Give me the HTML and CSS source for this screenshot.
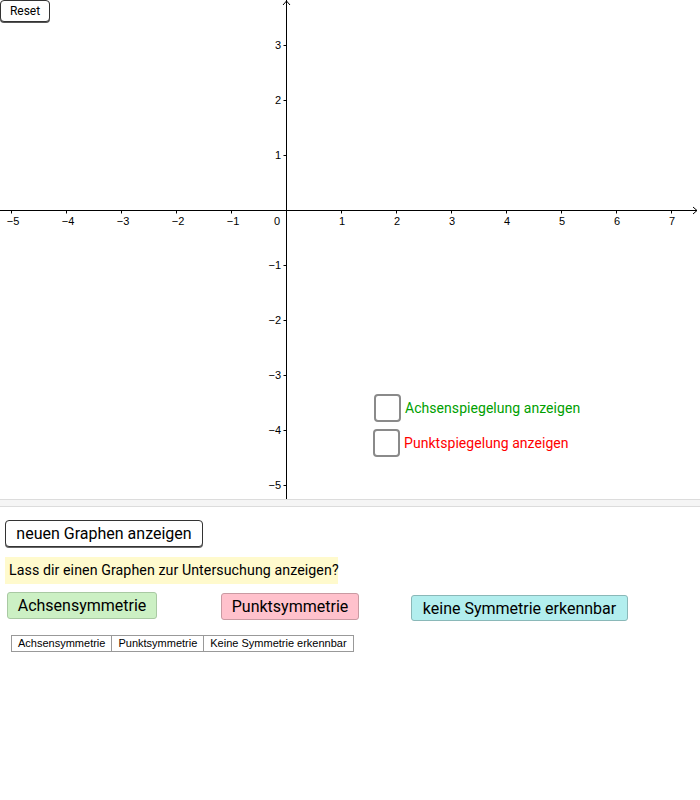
FILE: index.html
```html
<!DOCTYPE html>
<html>
<head>
<meta charset="utf-8">
<link rel="stylesheet" href="styles.css">
</head>
<body>
<div class="applet">
  <div class="graph">
    <svg class="axes" width="698" height="499" viewBox="0 0 698 499">
      <g stroke="#000" stroke-width="1" fill="none">
        <line x1="286.5" y1="0" x2="286.5" y2="499"/>
        <line x1="0" y1="210.5" x2="697" y2="210.5"/>
        <polyline points="283,5 286.5,1 290,5"/>
        <polyline points="693,207 697,210.5 693,214"/>
        <line x1="11.5" y1="210.5" x2="11.5" y2="213.5"/>
        <line x1="66.5" y1="210.5" x2="66.5" y2="213.5"/>
        <line x1="121.5" y1="210.5" x2="121.5" y2="213.5"/>
        <line x1="176.5" y1="210.5" x2="176.5" y2="213.5"/>
        <line x1="231.5" y1="210.5" x2="231.5" y2="213.5"/>
        <line x1="341.5" y1="210.5" x2="341.5" y2="213.5"/>
        <line x1="396.5" y1="210.5" x2="396.5" y2="213.5"/>
        <line x1="451.5" y1="210.5" x2="451.5" y2="213.5"/>
        <line x1="506.5" y1="210.5" x2="506.5" y2="213.5"/>
        <line x1="561.5" y1="210.5" x2="561.5" y2="213.5"/>
        <line x1="616.5" y1="210.5" x2="616.5" y2="213.5"/>
        <line x1="671.5" y1="210.5" x2="671.5" y2="213.5"/>
        <line x1="283.5" y1="45.5" x2="286.5" y2="45.5"/>
        <line x1="283.5" y1="100.5" x2="286.5" y2="100.5"/>
        <line x1="283.5" y1="155.5" x2="286.5" y2="155.5"/>
        <line x1="283.5" y1="265.5" x2="286.5" y2="265.5"/>
        <line x1="283.5" y1="320.5" x2="286.5" y2="320.5"/>
        <line x1="283.5" y1="375.5" x2="286.5" y2="375.5"/>
        <line x1="283.5" y1="430.5" x2="286.5" y2="430.5"/>
        <line x1="283.5" y1="485.5" x2="286.5" y2="485.5"/>
      </g>
      <g class="xlab" text-anchor="middle">
        <text x="13" y="225">−5</text>
        <text x="68" y="225">−4</text>
        <text x="123" y="225">−3</text>
        <text x="178" y="225">−2</text>
        <text x="233" y="225">−1</text>
        <text x="277" y="225">0</text>
        <text x="342" y="225">1</text>
        <text x="397" y="225">2</text>
        <text x="452" y="225">3</text>
        <text x="507" y="225">4</text>
        <text x="562" y="225">5</text>
        <text x="617" y="225">6</text>
        <text x="672" y="225">7</text>
      </g>
      <g class="ylab" text-anchor="end">
        <text x="281" y="49">3</text>
        <text x="281" y="104">2</text>
        <text x="281" y="159">1</text>
        <text x="281" y="269">−1</text>
        <text x="281" y="324">−2</text>
        <text x="281" y="379">−3</text>
        <text x="281" y="434">−4</text>
        <text x="281" y="489">−5</text>
      </g>
    </svg>
    <button class="reset">Reset</button>
    <label class="check check-achse"><span class="box"></span><span class="lbl green">Achsenspiegelung anzeigen</span></label>
    <label class="check check-punkt"><span class="box"></span><span class="lbl red">Punktspiegelung anzeigen</span></label>
  </div>
  <div class="divider"></div>
  <div class="panel">
    <button class="btn-new">neuen Graphen anzeigen</button>
    <div class="hint">Lass dir einen Graphen zur Untersuchung anzeigen?</div>
    <div class="choices">
      <button class="choice c-achse">Achsensymmetrie</button>
      <button class="choice c-punkt">Punktsymmetrie</button>
      <button class="choice c-keine">keine Symmetrie erkennbar</button>
    </div>
    <table class="result">
      <tr><td>Achsensymmetrie</td><td>Punktsymmetrie</td><td>Keine Symmetrie erkennbar</td></tr>
    </table>
  </div>
</div>
</body>
</html>
```

FILE: styles.css
```css
html, body {
  margin: 0;
  padding: 0;
  background: #fff;
}
body {
  font-family: Roboto, "Liberation Sans", sans-serif;
  color: #000;
}
.applet {
  width: 700px;
}
.graph {
  position: relative;
  width: 698px;
  height: 499px;
  overflow: hidden;
}
.axes {
  display: block;
}
.axes text {
  font-family: "Liberation Sans", Arial, sans-serif;
  font-size: 11px;
  fill: #000;
}
.reset {
  position: absolute;
  left: 0;
  top: 0;
  width: 50px;
  height: 22px;
  padding: 0;
  background: #fff;
  border: 1px solid #333;
  border-radius: 4px;
  box-shadow: 0 1px 0 #555;
  font-family: Roboto, sans-serif;
  font-size: 12px;
  color: #000;
}
.check {
  position: absolute;
  display: flex;
  align-items: center;
  gap: 4px;
}
.check-achse {
  left: 374px;
  top: 394px;
}
.check-punkt {
  left: 373px;
  top: 429px;
}
.box {
  width: 23px;
  height: 24px;
  border: 2px solid #8a8a8a;
  border-radius: 4px;
  background: #fff;
}
.lbl {
  font-size: 14px;
  letter-spacing: 0.05px;
}
.green {
  color: #00a000;
}
.red {
  color: #ff0000;
}
.divider {
  height: 6px;
  background: #f5f5f5;
  border-top: 1px solid #dcdcdc;
  border-bottom: 1px solid #dcdcdc;
}
.panel {
  padding: 13px 0 0 5px;
}
button {
  font-family: Roboto, sans-serif;
  cursor: pointer;
}
.btn-new {
  display: block;
  height: 27px;
  width: 198px;
  padding: 0;
  background: #fff;
  border: 1px solid #333;
  border-radius: 4px;
  box-shadow: 0 1px 0 #666;
  font-size: 16px;
  color: #000;
}
.hint {
  margin-top: 10px;
  width: 333px;
  height: 27px;
  line-height: 27px;
  background: #fffacd;
  font-size: 14.2px;
  letter-spacing: 0.08px;
  padding-left: 4px;
  box-sizing: border-box;
  white-space: nowrap;
}
.choices {
  display: flex;
  align-items: flex-start;
  margin-top: 8px;
}
.choice {
  padding: 0;
  font-size: 16px;
  color: #000;
  border-radius: 3px;
  border: 1px solid #9a9a9a;
}
.c-achse {
  margin-left: 2px;
  width: 150px;
  height: 27px;
  background: #ccf0c4;
  border-color: #a9c9a3;
}
.c-punkt {
  margin-left: 64px;
  margin-top: 1px;
  width: 138px;
  height: 27px;
  background: #ffc1cc;
  border-color: #c99aa2;
}
.c-keine {
  margin-left: 52px;
  margin-top: 3px;
  width: 217px;
  height: 26px;
  background: #b2eeee;
  border-color: #8ab8b8;
}
.result {
  margin-top: 14px;
  margin-left: 6px;
  border-collapse: collapse;
  font-family: "Liberation Sans", Arial, sans-serif;
  font-size: 11px;
}
.result td {
  border: 1px solid #999;
  padding: 0 6px;
  height: 15px;
  line-height: 15px;
}
```
